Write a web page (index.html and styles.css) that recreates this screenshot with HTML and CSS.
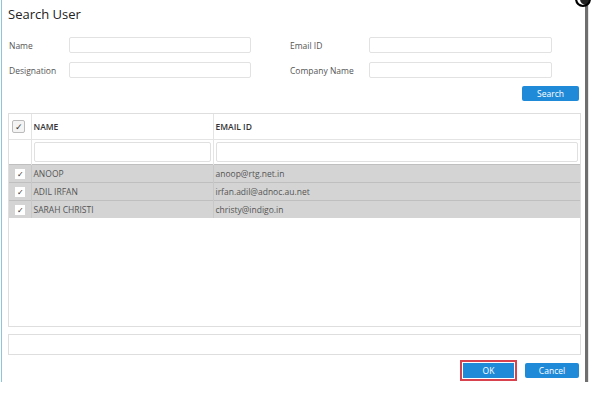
FILE: index.html
```html
<!DOCTYPE html>
<html lang="en">
<head>
  <meta charset="UTF-8">
  <title>Search User</title>
  <link rel="stylesheet" href="styles.css">
</head>
<body>

  <div class="dialog">
    <span class="close-btn"></span>

    <h1 class="title">Search User</h1>

    <div class="search-form">
      <div class="field">
        <label>Name</label>
        <input type="text" class="text-input wide-a">
      </div>
      <div class="field">
        <label class="label-b">Email ID</label>
        <input type="text" class="text-input wide-b">
      </div>
      <div class="field">
        <label>Designation</label>
        <input type="text" class="text-input wide-a">
      </div>
      <div class="field">
        <label class="label-b">Company Name</label>
        <input type="text" class="text-input wide-b">
      </div>
    </div>

    <div class="search-row">
      <button class="btn">Search</button>
    </div>

    <div class="grid">
      <table class="user-table">
        <colgroup>
          <col class="col-check">
          <col class="col-name">
          <col>
        </colgroup>
        <thead>
          <tr class="head-row">
            <th><span class="check big">✓</span></th>
            <th>NAME</th>
            <th>EMAIL ID</th>
          </tr>
          <tr class="filter-row">
            <td></td>
            <td><input type="text" class="filter-input"></td>
            <td><input type="text" class="filter-input"></td>
          </tr>
        </thead>
        <tbody>
          <tr class="data-row">
            <td><span class="check">✓</span></td>
            <td>ANOOP</td>
            <td>anoop@rtg.net.in</td>
          </tr>
          <tr class="data-row">
            <td><span class="check">✓</span></td>
            <td>ADIL IRFAN</td>
            <td>irfan.adil@adnoc.au.net</td>
          </tr>
          <tr class="data-row">
            <td><span class="check">✓</span></td>
            <td>SARAH CHRISTI</td>
            <td>christy@indigo.in</td>
          </tr>
        </tbody>
      </table>
    </div>

    <div class="selected-box"></div>

    <div class="footer">
      <button class="btn ok">OK</button>
      <button class="btn cancel">Cancel</button>
    </div>
  </div>

</body>
</html>
```

FILE: styles.css
```css
body {
  margin: 0;
  background: #fff;
  font-family: "Open Sans", "Liberation Sans", sans-serif;
  color: #444;
  overflow: hidden;
}

.dialog {
  position: relative;
  box-sizing: border-box;
  width: 584px;
  height: 382px;
  margin-left: 1px;
  padding: 0 4px 0 6px;
  background: #fff;
  border-left: 1px solid #8fc5dc;
  box-shadow: 3px 3px 1px #6f6f6f;
}

.close-btn {
  position: absolute;
  top: -9px;
  left: 573px;
  width: 12px;
  height: 12px;
  border-radius: 50%;
  background: #222;
  border: 2px solid #000;
  box-shadow: inset 3px 0 0 #fff;
}

.title {
  margin: 0;
  padding: 4px 0 0 0;
  font-size: 13px;
  font-weight: normal;
  line-height: 20px;
  color: #222;
}

.search-form {
  display: grid;
  grid-template-columns: 243px 283px;
  column-gap: 38px;
  row-gap: 9px;
  margin-top: 13px;
  padding-left: 1px;
}

.field {
  display: flex;
  align-items: center;
}

.field label {
  width: 60px;
  font-size: 8.5px;
  color: #555;
}

.field .label-b {
  width: 79px;
}

.text-input {
  box-sizing: border-box;
  height: 16px;
  border: 1px solid #e2e2e2;
  border-radius: 2px;
  background: #fff;
}

.wide-a { width: 182px; }
.wide-b { width: 183px; }

.search-row {
  display: flex;
  justify-content: flex-end;
  margin-top: 8px;
  padding-right: 2px;
}

.btn {
  height: 15px;
  padding: 0;
  border: none;
  border-radius: 2px;
  background: #1f8bd8;
  color: #fff;
  font-family: "Open Sans", "Liberation Sans", sans-serif;
  font-size: 8.5px;
  line-height: 15px;
  width: 57px;
}

.grid {
  box-sizing: border-box;
  height: 214px;
  margin-top: 12px;
  border: 1px solid #dedede;
}

.user-table {
  width: 100%;
  border-collapse: collapse;
  table-layout: fixed;
  font-size: 8.5px;
}

.col-check { width: 22px; }
.col-name { width: 182px; }

.user-table th,
.user-table td {
  padding: 0 2px;
  text-align: left;
  border-right: 1px solid #e4e4e4;
}

.user-table th:last-child,
.user-table td:last-child {
  border-right: none;
}

.head-row th {
  height: 25px;
  font-weight: 600;
  color: #333;
  border-bottom: 1px solid #e4e4e4;
}

.filter-row td {
  height: 24px;
  padding: 0 2px;
}

.filter-input {
  box-sizing: border-box;
  display: block;
  width: 100%;
  height: 20px;
  border: 1px solid #e0e0e0;
  border-radius: 2px;
}

.data-row td {
  height: 17px;
  background: #d4d4d4;
  color: #555;
  border-top: 1px solid #bfbfbf;
  border-right-color: #c8c8c8;
}

.check {
  display: inline-block;
  box-sizing: border-box;
  width: 10px;
  height: 10px;
  background: #fff;
  color: #333;
  font-size: 8px;
  line-height: 10px;
  text-align: center;
  vertical-align: middle;
  margin-left: 4px;
}

.check.big {
  width: 13px;
  height: 13px;
  margin-left: 1px;
  border: 1px solid #bbb;
  border-radius: 2px;
  background: #f4f4f4;
  line-height: 11px;
  font-size: 9px;
  font-weight: normal;
}

.selected-box {
  box-sizing: border-box;
  height: 21px;
  margin-top: 7px;
  border: 1px solid #dedede;
}

.footer {
  display: flex;
  justify-content: flex-end;
  gap: 11px;
  margin-top: 8px;
  padding-right: 2px;
}

.ok {
  width: 51px;
  border-radius: 0;
  outline: 2px solid #d8414e;
  outline-offset: 1px;
}

.cancel {
  width: 54px;
}
```
